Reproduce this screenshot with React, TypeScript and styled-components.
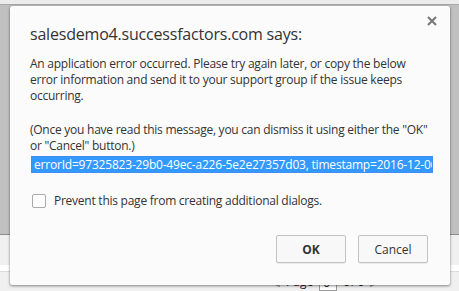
import React from 'react';
import styled, { createGlobalStyle } from 'styled-components';

const GlobalStyle = createGlobalStyle`
  html, body {
    margin: 0;
    padding: 0;
    background: #f0f0f0;
    font-family: "Open Sans", "Noto Sans", sans-serif;
    overflow: hidden;
  }
`;

const Page = styled.div`
  position: relative;
  width: 459px;
  height: 291px;
  display: flex;
  flex-direction: column;
  background: #f0f0f0;
`;

const TopStrip = styled.div`
  height: 4px;
  background: #ececec;
  border-bottom: 1px solid #a8a8a8;
`;

const GrayPanel = styled.div`
  height: 229px;
  background: #c0c0c0;
  border-bottom: 1px solid #8e8e8e;
`;

const ListArea = styled.div`
  flex: 1;
  background: #f0f0f0;
  display: flex;
  flex-direction: column;
`;

const WhiteBand = styled.div`
  margin-top: 30px;
  height: 6px;
  background: #ffffff;
  border-bottom: 1px solid #dcdcdc;
`;

const Pager = styled.div`
  display: flex;
  align-items: flex-start;
  gap: 6px;
  padding-left: 272px;
  font-size: 12px;
  color: #222;
  line-height: 14px;
  padding-top: 3px;
  white-space: nowrap;
`;

const PagerArrow = styled.span`
  color: #999;
  font-size: 10px;
`;

const PagerBox = styled.span`
  border: 1px solid #999;
  background: #fff;
  padding: 0 6px 0 3px;
`;

const Dialog = styled.div`
  position: absolute;
  left: 10px;
  top: 6px;
  width: 440px;
  height: 279px;
  box-sizing: border-box;
  background: #fbfbfb;
  border-radius: 2px;
  box-shadow: 0 1px 3px rgba(0, 0, 0, 0.45), 0 0 1px rgba(0, 0, 0, 0.3);
  padding: 17px 20px 0 20px;
  display: flex;
  flex-direction: column;
  color: #333;
`;

const Close = styled.div`
  position: absolute;
  right: 12px;
  top: 9px;
  width: 12px;
  height: 12px;
  display: flex;
  align-items: center;
  justify-content: center;
`;

const Title = styled.div`
  font-size: 16px;
  line-height: 22px;
  color: #333;
  margin-bottom: 11px;
  letter-spacing: -0.2px;
`;

const Message = styled.div<{ $gap: number }>`
  font-size: 12px;
  line-height: 16px;
  color: #333;
  letter-spacing: -0.25px;
  white-space: pre-line;
  margin-bottom: ${(p) => p.$gap}px;
`;

const ErrorField = styled.div`
  margin-left: 1px;
  width: 398px;
  height: 15px;
  border: 1px solid #3f8ef2;
  padding: 0 0 0 2px;
  background: #3399ff;
  overflow: hidden;
  white-space: nowrap;
`;

const Selected = styled.span`
  display: block;
  color: #ffffff;
  font-size: 12px;
  line-height: 15px;
  letter-spacing: -0.2px;
`;

const CheckRow = styled.label`
  display: flex;
  align-items: center;
  gap: 8px;
  margin-top: 19px;
  margin-left: 2px;
  font-size: 12px;
  color: #333;
  letter-spacing: -0.25px;
`;

const Box = styled.span`
  width: 12px;
  height: 12px;
  border: 1px solid #a9a9a9;
  border-radius: 2px;
  background: #fdfdfd;
`;

const Buttons = styled.div`
  display: flex;
  justify-content: flex-end;
  gap: 12px;
  margin-top: 26px;
  margin-right: 2px;
`;

const Button = styled.button<{ $primary?: boolean }>`
  width: 70px;
  height: 28px;
  background: #f8f8f8;
  border: 1px solid #c3c3c3;
  border-radius: 2px;
  font-family: "Open Sans", "Noto Sans", sans-serif;
  font-size: 12px;
  font-weight: ${(p) => (p.$primary ? 700 : 400)};
  color: #333;
  padding: 0;
  box-shadow: 0 1px 0 rgba(0, 0, 0, 0.06);
`;

export default function App() {
  return (
    <>
      <GlobalStyle />
      <Page>
        <TopStrip />
        <GrayPanel />
        <ListArea>
          <WhiteBand />
          <Pager>
            <PagerArrow>◀</PagerArrow>
            <span>Page</span>
            <PagerBox>0</PagerBox>
            <span>of 0</span>
            <PagerArrow>▶</PagerArrow>
          </Pager>
        </ListArea>
        <Dialog>
          <Close>
            <svg width="10" height="10" viewBox="0 0 10 10">
              <path d="M1 1 L9 9 M9 1 L1 9" stroke="#777" strokeWidth="2" />
            </svg>
          </Close>
          <Title>salesdemo4.successfactors.com says:</Title>
          <Message $gap={18}>
            {'An application error occurred. Please try again later, or copy the below\nerror information and send it to your support group if the issue keeps\noccurring.'}
          </Message>
          <Message $gap={2}>
            {'(Once you have read this message, you can dismiss it using either the "OK"\nor "Cancel" button.)'}
          </Message>
          <ErrorField>
            <Selected>errorId=97325823-29b0-49ec-a226-5e2e27357d03, timestamp=2016-12-06</Selected>
          </ErrorField>
          <CheckRow>
            <Box />
            Prevent this page from creating additional dialogs.
          </CheckRow>
          <Buttons>
            <Button $primary>OK</Button>
            <Button>Cancel</Button>
          </Buttons>
        </Dialog>
      </Page>
    </>
  );
}
